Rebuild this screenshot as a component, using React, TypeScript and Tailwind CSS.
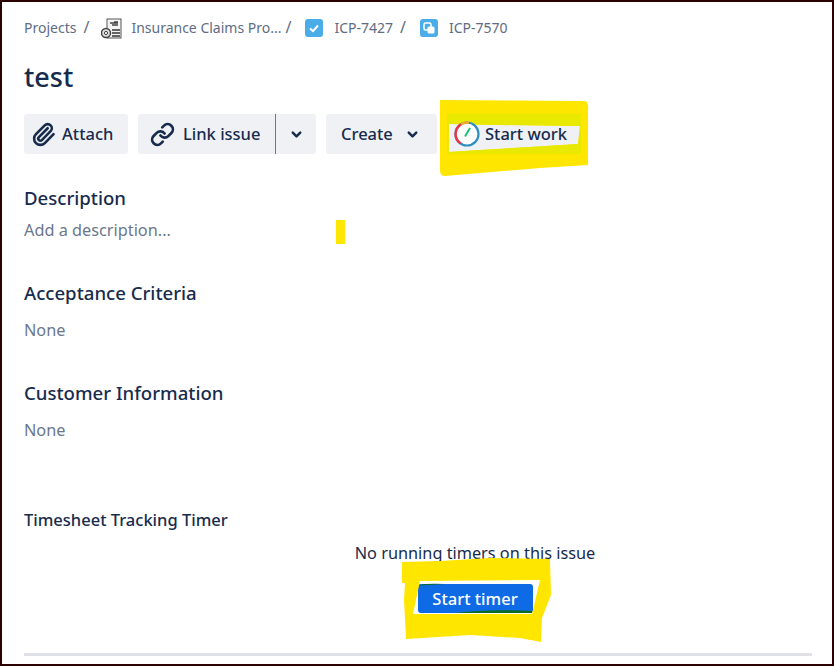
import { Paperclip, Link, ChevronDown } from "lucide-react";

const font = "font-['Noto_Sans',sans-serif]";

const Slash = ({ className }: { className: string }) => <span className={`text-[#5e6c84] text-[16px] pb-[2px] ${className}`}>/</span>;

const ProjectIcon = () => (
  <svg width="21" height="21" viewBox="0 0 21 21" className="shrink-0 block">
    <rect x="6" y="1" width="14" height="19" fill="#f4f4f4" stroke="#555" />
    <path d="M9 5h8M11 7h6M13 4h4" stroke="#444" strokeWidth="1.5" />
    <path d="M11 12h8M11 15h8M11 18h8" stroke="#333" strokeWidth="1.3" />
    <circle cx="5" cy="15" r="4.5" fill="#ddd" stroke="#444" strokeWidth="1.5" />
    <circle cx="5" cy="15" r="1.6" fill="#fff" stroke="#444" />
  </svg>
);

const StoryIcon = () => (
  <svg width="18" height="18" viewBox="0 0 18 18" className="shrink-0 block">
    <rect width="18" height="18" rx="3" fill="#4bade8" />
    <path d="M5 9.5l3 2.6 5-5.6" fill="none" stroke="#fff" strokeWidth="2" />
  </svg>
);

const SubtaskIcon = () => (
  <svg width="18" height="18" viewBox="0 0 18 18" className="shrink-0 block">
    <rect width="18" height="18" rx="3" fill="#4bade8" />
    <rect x="4" y="4" width="7" height="7" rx="1.5" fill="none" stroke="#fff" strokeWidth="1.5" />
    <rect x="7.5" y="7.5" width="7" height="7" rx="1.5" fill="#fff" />
  </svg>
);

const GaugeIcon = () => (
  <svg width="26" height="26" viewBox="0 0 26 26" className="shrink-0 relative z-10">
    <circle cx="13" cy="13" r="11.5" fill="#fff" stroke="#2e8fc0" strokeWidth="2.2" />
    <path d="M6.5 22.4A11.5 11.5 0 0 1 7 3.2" fill="none" stroke="#ef3340" strokeWidth="2.4" />
    <path d="M7 3.2A11.5 11.5 0 0 1 15 1.7" fill="none" stroke="#f5a623" strokeWidth="2.4" />
    <path d="M11 15.5L16 7" stroke="#19c37d" strokeWidth="2" />
  </svg>
);

const btn = "h-10 bg-[#f0f1f4] rounded-[3px] flex items-center text-[#172b4d] text-[16.5px] font-medium";

const Field = ({ label, children, className }: { label: string; children?: React.ReactNode; className?: string }) => (
  <div className={className}>
    <h2 className="text-[#172b4d] text-[18.6px] font-medium leading-[26px]">{label}</h2>
    {children}
  </div>
);

export default function App() {
  return (
    <div className={`${font} relative w-[834px] h-[666px] bg-white border-2 border-[#2b0000] pl-[22px] overflow-hidden`}>
      <nav className="flex items-center h-5 mt-[16px] text-[14px] text-[#5e6c84] whitespace-nowrap">
        <span className="pb-[2px]">Projects</span>
        <Slash className="ml-[7px]" />
        <span className="ml-[12px]"><ProjectIcon /></span>
        <span className="ml-[9px] pb-[2px]">Insurance Claims Pro...</span>
        <Slash className="ml-[4px]" />
        <span className="ml-[14px]"><StoryIcon /></span>
        <span className="ml-[11px] pb-[2px]">ICP-7427</span>
        <Slash className="ml-[7px]" />
        <span className="ml-[14px]"><SubtaskIcon /></span>
        <span className="ml-[11px] pb-[2px]">ICP-7570</span>
      </nav>

      <h1 className="text-[#172b4d] text-[27px] font-medium leading-[38px] mt-[20px]">test</h1>

      <div className="flex mt-[18px] gap-[10px] whitespace-nowrap">
        <button className={`${btn} w-[104px] pl-[7px] gap-[6px]`}>
          <Paperclip size={25} strokeWidth={2.5} />
          Attach
        </button>
        <div className={`${btn} w-[178px]`}>
          <span className="flex items-center gap-[8px] pl-[12px] w-[138px] h-full border-r border-[#6b778c]">
            <Link size={25} strokeWidth={2.6} />
            Link issue
          </span>
          <ChevronDown size={15} strokeWidth={4} className="ml-[13px]" />
        </div>
        <button className={`${btn} w-[111px] pl-[15px] gap-[12px]`}>
          Create
          <ChevronDown size={15} strokeWidth={4} />
        </button>
        <button className={`${btn} w-[133px] pl-[6px] gap-[5px] ml-[1px]`}>
          <GaugeIcon />
          Start work
        </button>
      </div>

      <Field label="Description" className="mt-[31px]">
        <p className="text-[#6b778c] text-[16.3px] leading-[24px] mt-[7px]">Add a description...</p>
      </Field>
      <Field label="Acceptance Criteria" className="mt-[38px]">
        <p className="text-[#6b778c] text-[16.3px] leading-[24px] mt-[12px]">None</p>
      </Field>
      <Field label="Customer Information" className="mt-[38px]">
        <p className="text-[#6b778c] text-[16.3px] leading-[24px] mt-[12px]">None</p>
      </Field>

      <h2 className="text-[#172b4d] text-[16.5px] font-medium leading-[24px] mt-[66px]">Timesheet Tracking Timer</h2>
      <div className="flex flex-col items-center w-[788px] pl-[114px]">
        <p className="text-[#172b4d] text-[16.3px] leading-[24px] mt-[9px]">No running timers on this issue</p>
        <button className="mt-[19px] w-[115px] h-[29px] pt-[1px] bg-[#0f6ae6] rounded-[3px] text-white text-[16.5px] font-medium leading-[28px]">
          Start timer
        </button>
      </div>
      <div className="h-[3px] bg-[#dfe1e6] w-[788px] mt-[40px]" />

      {/* marker annotations drawn over the screenshot */}
      <svg className="absolute -left-[2px] -top-[2px] pointer-events-none" width="834" height="666" viewBox="0 0 834 666">
        <path
          fillRule="evenodd"
          fill="#ffe600"
          d="M440 100L585 101Q589 102 588 110L588 165L540 168L445 176Q440 176 440 170ZM449 124L500 125L580 126L578 144L530 147L480 150L449 152Z"
        />
        <path
          fillRule="evenodd"
          fill="#e8e800"
          d="M447 114H581V154H447ZM449 124L500 125L580 126L578 144L530 147L480 150L449 152Z"
        />
        <rect x="336" y="220" width="9" height="24" fill="#ffe600" />
        <path
          fillRule="evenodd"
          fill="#ffe600"
          d="M402 562L440 561L490 558L550 559L551 595L542 618L541 642L520 638L470 635L406 639L404 600L405 583L402 583ZM420 581L540 580L532 614L413 614Z"
        />
        <path d="M455 613Q490 609 532 611V613Z" fill="#0b6b1e" />
        <path d="M419 585Q428 583 445 584L419 585.5Z" fill="#0b6b1e" />
      </svg>
    </div>
  );
}
